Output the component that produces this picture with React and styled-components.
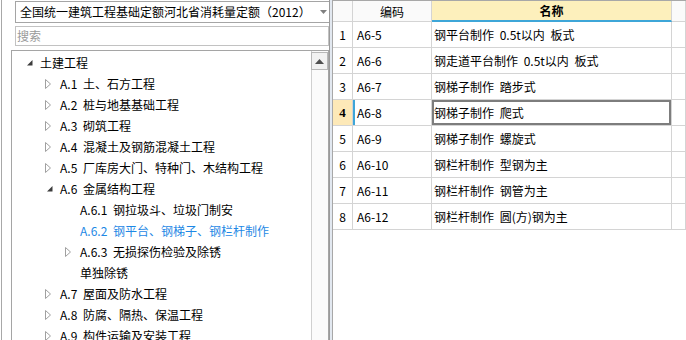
import React from 'react';
import styled, { createGlobalStyle } from 'styled-components';

const GlobalStyle = createGlobalStyle`
  html, body {
    margin: 0;
    padding: 0;
    background: #ffffff;
  }
  body {
    font-family: "Noto Sans CJK SC", "DejaVu Sans", sans-serif;
    font-size: 12px;
    word-spacing: 3px;
    color: #000;
  }
`;

const Window = styled.div`
  display: flex;
  width: 686px;
  height: 340px;
  overflow: hidden;
  background: #fff;
`;

const LeftPanel = styled.div`
  display: flex;
  flex-direction: column;
  width: 327px;
  margin-left: 1px;
  border-left: 1px solid #a8a8a8;
  padding-top: 1px;
  flex-shrink: 0;
`;

const Dropdown = styled.div`
  display: flex;
  align-items: center;
  justify-content: space-between;
  height: 20px;
  margin-left: 13px;
  width: 311px;
  border: 1px solid #a5a5a5;
  padding-left: 4px;
  box-sizing: content-box;
  line-height: 20px;
  white-space: nowrap;
`;

const Caret = styled.span`
  display: inline-flex;
  width: 14px;
  justify-content: center;
  margin-right: 1px;
`;

const SearchBox = styled.div`
  margin: 3px 0 0 13px;
  width: 311px;
  height: 18px;
  border: 1px solid #c2c2c2;
  padding-left: 1px;
  box-sizing: content-box;
  line-height: 18px;
  color: #9a9a9a;
`;

const TreeBox = styled.div`
  display: flex;
  margin: 4px 0 0 9px;
  width: 316px;
  flex: 1;
  border: 1px solid #a5a5a5;
  border-bottom: none;
  overflow: hidden;
`;

const TreeList = styled.div`
  flex: 1;
  padding-top: 1px;
`;

const TreeRow = styled.div`
  display: flex;
  align-items: center;
  height: 21px;
  padding-left: ${({ $level }) => 8 + $level * 20}px;
  white-space: nowrap;
  color: ${({ $active }) => ($active ? '#1e88e5' : '#000')};
`;

const Toggle = styled.span`
  display: inline-flex;
  width: 20px;
  height: 12px;
  flex-shrink: 0;
`;

const Scrollbar = styled.div`
  width: 16px;
  border-left: 1px solid #d0d0d0;
  background: #fbfbfb;
  display: flex;
  flex-direction: column;
`;

const ScrollButton = styled.div`
  height: 16px;
  border: 1px solid #b8b8b8;
  background: #f2f2f2;
  display: flex;
  align-items: center;
  justify-content: center;
  margin: 1px 0 0 -1px;
`;

const Splitter = styled.div`
  width: 4px;
  flex-shrink: 0;
  background: linear-gradient(to right, #9a9a9a 0 1px, #e2e8f0 1px 3px, #a8a8a8 3px 4px);
`;

const Grid = styled.div`
  flex: 1;
  display: grid;
  grid-template-columns: 20px 79px 240px 1fr;
  grid-auto-rows: 26px;
  grid-template-rows: 21px;
  align-content: start;
  border-top: 1px solid #a8a8a8;
`;

const HeadCell = styled.div`
  display: flex;
  align-items: center;
  justify-content: center;
  background: ${({ $hl }) => ($hl ? '#fdf0bc' : '#fafafa')};
  font-weight: ${({ $hl }) => ($hl ? 700 : 400)};
  border-right: 1px solid #d4d4d4;
  border-bottom: ${({ $hl }) => ($hl ? '2px solid #3ea6d8' : '1px solid #d4d4d4')};
  box-sizing: border-box;
  white-space: nowrap;
`;

const NumCell = styled.div`
  display: flex;
  align-items: center;
  justify-content: center;
  background: ${({ $current }) => ($current ? '#fde9b8' : '#fff')};
  font-weight: ${({ $current }) => ($current ? 700 : 400)};
  font-family: ${({ $current }) => ($current ? '"Liberation Serif", serif' : 'inherit')};
  font-size: ${({ $current }) => ($current ? '13px' : '12px')};
  border-right: 1px solid #d4d4d4;
  border-bottom: 1px solid #d4d4d4;
  box-sizing: border-box;
`;

const Cell = styled.div`
  display: flex;
  align-items: center;
  padding-left: ${({ $pad }) => $pad || 2}px;
  border-right: 1px solid #d4d4d4;
  border-bottom: 1px solid #d4d4d4;
  box-sizing: border-box;
  white-space: nowrap;
  overflow: hidden;
  box-shadow: ${({ $current, $mark }) =>
    $current ? 'inset 0 0 0 2px #7d7d7d' : $mark ? 'inset 2px 0 0 #3ea6d8' : 'none'};
`;

const Collapsed = () => (
  <svg width="20" height="12" viewBox="0 0 20 12">
    <path d="M5.5 1.5 L10.5 6 L5.5 10.5 Z" fill="#fff" stroke="#a0a0a0" strokeWidth="1" />
  </svg>
);

const Expanded = () => (
  <svg width="20" height="12" viewBox="0 0 20 12">
    <path d="M12.5 3 L12.5 8.5 L7 8.5 Z" fill="#3c3c3c" />
  </svg>
);

const tree = [
  { label: '土建工程', level: 0, state: 'open' },
  { label: 'A.1 土、石方工程', level: 1, state: 'closed' },
  { label: 'A.2 桩与地基基础工程', level: 1, state: 'closed' },
  { label: 'A.3 砌筑工程', level: 1, state: 'closed' },
  { label: 'A.4 混凝土及钢筋混凝土工程', level: 1, state: 'closed' },
  { label: 'A.5 厂库房大门、特种门、木结构工程', level: 1, state: 'closed' },
  { label: 'A.6 金属结构工程', level: 1, state: 'open' },
  { label: 'A.6.1 钢拉圾斗、垃圾门制安', level: 2 },
  { label: 'A.6.2 钢平台、钢梯子、钢栏杆制作', level: 2, active: true },
  { label: 'A.6.3 无损探伤检验及除锈', level: 2, state: 'closed' },
  { label: '单独除锈', level: 2 },
  { label: 'A.7 屋面及防水工程', level: 1, state: 'closed' },
  { label: 'A.8 防腐、隔热、保温工程', level: 1, state: 'closed' },
  { label: 'A.9 构件运输及安装工程', level: 1, state: 'closed' },
];

const rows = [
  ['A6-5', '钢平台制作 0.5t以内 板式'],
  ['A6-6', '钢走道平台制作 0.5t以内 板式'],
  ['A6-7', '钢梯子制作 踏步式'],
  ['A6-8', '钢梯子制作 爬式'],
  ['A6-9', '钢梯子制作 螺旋式'],
  ['A6-10', '钢栏杆制作 型钢为主'],
  ['A6-11', '钢栏杆制作 钢管为主'],
  ['A6-12', '钢栏杆制作 圆(方)钢为主'],
];

const CURRENT = 3;

export default function App() {
  return (
    <>
      <GlobalStyle />
      <Window>
        <LeftPanel>
          <Dropdown>
            <span>全国统一建筑工程基础定额河北省消耗量定额（2012）</span>
            <Caret>
              <svg width="7" height="4" viewBox="0 0 7 4">
                <path d="M0 0 L7 0 L3.5 4 Z" fill="#808080" />
              </svg>
            </Caret>
          </Dropdown>
          <SearchBox>搜索</SearchBox>
          <TreeBox>
            <TreeList>
              {tree.map((n, i) => (
                <TreeRow key={i} $level={n.level} $active={n.active}>
                  <Toggle>
                    {n.state === 'open' && <Expanded />}
                    {n.state === 'closed' && <Collapsed />}
                  </Toggle>
                  {n.label}
                </TreeRow>
              ))}
            </TreeList>
            <Scrollbar>
              <ScrollButton>
                <svg width="9" height="5" viewBox="0 0 9 5">
                  <path d="M0 5 L4.5 0 L9 5 Z" fill="#505050" />
                </svg>
              </ScrollButton>
            </Scrollbar>
          </TreeBox>
        </LeftPanel>
        <Splitter />
        <Grid>
          <HeadCell />
          <HeadCell>编码</HeadCell>
          <HeadCell $hl>名称</HeadCell>
          <HeadCell />
          {rows.map(([code, name], i) => (
            <React.Fragment key={code}>
              <NumCell $current={i === CURRENT}>{i + 1}</NumCell>
              <Cell $pad={4} $mark={i === CURRENT}>{code}</Cell>
              <Cell $current={i === CURRENT}>{name}</Cell>
              <Cell />
            </React.Fragment>
          ))}
        </Grid>
      </Window>
    </>
  );
}
